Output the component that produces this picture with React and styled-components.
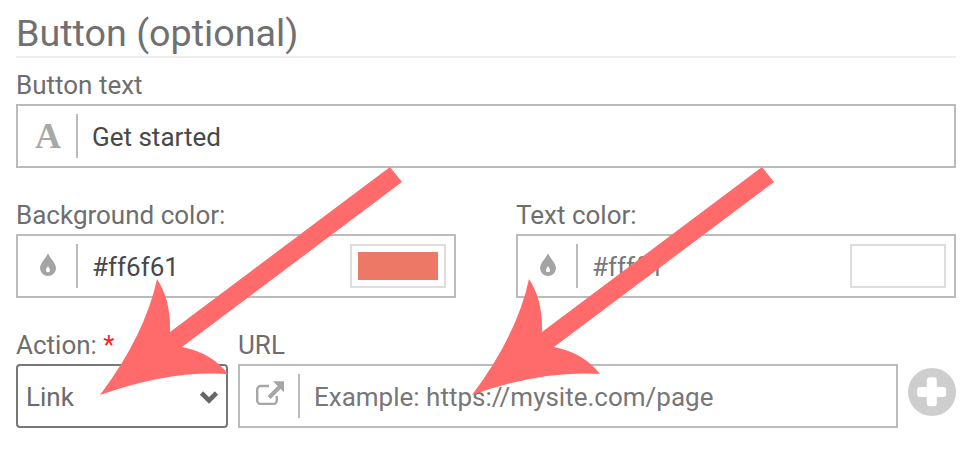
import React from "react";
import styled, { createGlobalStyle } from "styled-components";

const Global = createGlobalStyle`
  html, body { margin: 0; padding: 0; background: #fff; }
  body { font-family: Roboto, "Liberation Sans", sans-serif; }
  * { box-sizing: border-box; }
`;

const Page = styled.div`
  position: relative;
  width: 976px;
  height: 458px;
  padding: 13px 20px 0 16px;
  overflow: hidden;
`;

const Heading = styled.h2`
  margin: 0;
  height: 45px;
  padding-left: 0;
  border-bottom: 2px solid #eeeeee;
  font-size: 37.7px;
  line-height: 41px;
  font-weight: 400;
  color: #707070;
`;

const Field = styled.div`
  display: flex;
  flex-direction: column;
  margin-top: ${(p) => p.$top || "0"};
  width: ${(p) => p.$width || "auto"};
`;

const Label = styled.label`
  height: 32px;
  font-size: 26px;
  line-height: 27px;
  font-weight: 400;
  color: #6e6e6e;
`;

const Required = styled.span`
  color: #f22;
`;

const InputBox = styled.div`
  display: flex;
  align-items: center;
  height: 64px;
  border: 2px solid #bbb;
  padding: 8px 0;
`;

const IconCell = styled.div`
  flex: 0 0 60px;
  height: 44px;
  padding: 0 0 ${(p) => p.$lift || "0"} 2px;
  display: flex;
  align-items: center;
  justify-content: center;
  border-right: 2px solid #bbb;
`;

const SerifA = styled.span`
  font-family: "Liberation Serif", serif;
  font-weight: 700;
  font-size: 36px;
  line-height: 1;
  color: #a8a8a8;
`;

const Value = styled.div`
  flex: 1;
  padding: 2px 0 0 14px;
  font-size: 26px;
  line-height: 30px;
  font-weight: 400;
  color: ${(p) => p.$color || "#484848"};
`;

const Swatch = styled.div`
  flex: 0 0 96px;
  height: 44px;
  margin-right: 8px;
  border: 2px solid #ddd;
  padding: 6px;
`;

const SwatchFill = styled.div`
  height: 100%;
  background: ${(p) => p.$color};
`;

const ColorRow = styled.div`
  display: flex;
  gap: 60px;
  margin-top: 34px;
`;

const ActionRow = styled.div`
  display: flex;
  align-items: flex-end;
  gap: 10px;
  margin-top: 34px;
`;

const Select = styled.div`
  display: flex;
  align-items: center;
  justify-content: space-between;
  height: 64px;
  padding: 2px 7px 0 8px;
  border: 2px solid #777;
  border-radius: 4px;
  font-size: 26px;
  color: #6a6a6a;
`;

const AddButton = styled.div`
  flex: 0 0 48px;
  height: 48px;
  margin: 0 0 12px 0;
  display: flex;
`;

const ArrowLayer = styled.svg`
  position: absolute;
  inset: 0;
  pointer-events: none;
`;

const ChevronIcon = () => (
  <svg width="20" height="14" viewBox="0 0 20 14" fill="none">
    <path d="M2.5 3 10 10.5 17.5 3" stroke="#666" strokeWidth="4.6" />
  </svg>
);

const DropIcon = () => (
  <svg width="16" height="23" viewBox="0 0 16 23">
    <path
      fillRule="evenodd"
      fill="#a4a4a4"
      d="M8 0C9 4 16 10 16 15A8 8 0 0 1 0 15C0 10 7 4 8 0ZM8 13C7.4 14.6 6 15.6 6 17.2A2 2 0 0 0 10 17.2C10 15.6 8.6 14.6 8 13Z"
    />
  </svg>
);

const ExternalIcon = () => (
  <svg width="28" height="24" viewBox="0 0 28 24" fill="none">
    <path d="M20.8 15V19.5a3.5 3.5 0 0 1-3.5 3.5H4.7A3.5 3.5 0 0 1 1.2 19.5V8.5A3.5 3.5 0 0 1 4.7 5H13" stroke="#a6a6a6" strokeWidth="2.4" />
    <path d="M17 0.3H28V11.3L24.6 7.9 14.6 18 11.6 15 21.6 4.9Z" fill="#a6a6a6" />
  </svg>
);

const PlusIcon = () => (
  <svg width="48" height="48" viewBox="0 0 48 48">
    <circle cx="24" cy="24" r="24" fill="#cecece" />
    <rect x="9.2" y="19" width="29" height="10" rx="3" fill="#fff" />
    <rect x="18.8" y="9.2" width="10" height="29" rx="3" fill="#fff" />
  </svg>
);

const arrow = (dx) =>
  `M${390 + dx} 167 L${402 + dx} 182 L${182 + dx} 347 Q${212 + dx} 353 ${228 + dx} 374 Q${170 + dx} 370 ${100 + dx} 395 Q${145 + dx} 335 ${157 + dx} 279 Q${171 + dx} 300 ${170 + dx} 332 Z`;

export default function App() {
  return (
    <Page>
      <Global />
      <Heading>Button (optional)</Heading>
      <Field $top="14px">
        <Label>Button text</Label>
        <InputBox>
          <IconCell><SerifA>A</SerifA></IconCell>
          <Value>Get started</Value>
        </InputBox>
      </Field>
      <ColorRow>
        <Field $width="440px">
          <Label>Background color:</Label>
          <InputBox>
            <IconCell $lift="3px"><DropIcon /></IconCell>
            <Value>#ff6f61</Value>
            <Swatch><SwatchFill $color="#ee7866" /></Swatch>
          </InputBox>
        </Field>
        <Field $width="440px">
          <Label>Text color:</Label>
          <InputBox>
            <IconCell $lift="3px"><DropIcon /></IconCell>
            <Value $color="#777">#ffffff</Value>
            <Swatch><SwatchFill $color="#fff" /></Swatch>
          </InputBox>
        </Field>
      </ColorRow>
      <ActionRow>
        <Field $width="212px">
          <Label>Action: <Required>*</Required></Label>
          <Select>Link<ChevronIcon /></Select>
        </Field>
        <Field $width="660px">
          <Label>URL</Label>
          <InputBox>
            <IconCell $lift="6px"><ExternalIcon /></IconCell>
            <Value $color="#777">Example: https://mysite.com/page</Value>
          </InputBox>
        </Field>
        <AddButton><PlusIcon /></AddButton>
      </ActionRow>
      <ArrowLayer width="976" height="458" viewBox="0 0 976 458">
        <path d={arrow(0)} fill="#ff6b6b" />
        <path d={arrow(372)} fill="#ff6b6b" />
      </ArrowLayer>
    </Page>
  );
}
